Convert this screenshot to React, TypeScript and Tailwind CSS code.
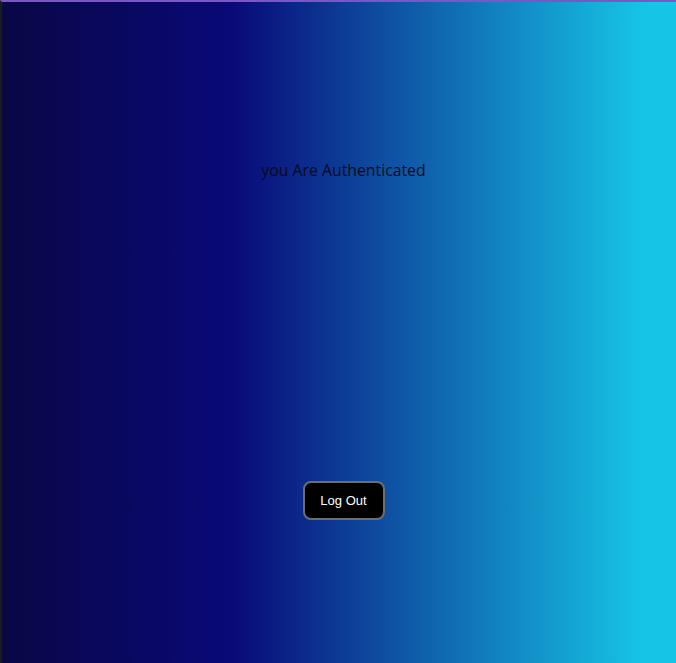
import React from "react";

const App: React.FC = () => {
  const handleLogout = () => {};

  return (
    <div className="flex h-[663px] w-full border-t-2 border-l-2 border-t-[#7e55c6] border-l-[#1c1c1c] bg-[linear-gradient(90deg,#0a0745_0%,#090978_34%,#16c4e6_95%)]">
      <div className="flex w-full flex-col items-center pl-[9px]">
        <p className="mt-[156px] font-['Open_Sans',sans-serif] text-[15.8px] leading-[24px] text-[#0a0a14]">
          you Are Authenticated
        </p>
        <button
          onClick={handleLogout}
          className="mt-[299px] h-[39px] w-[82px] rounded-lg border-2 border-[#6e6e6e] bg-black font-['Liberation_Sans',sans-serif] text-[13px] text-white"
        >
          Log Out
        </button>
      </div>
    </div>
  );
};

export default App;
